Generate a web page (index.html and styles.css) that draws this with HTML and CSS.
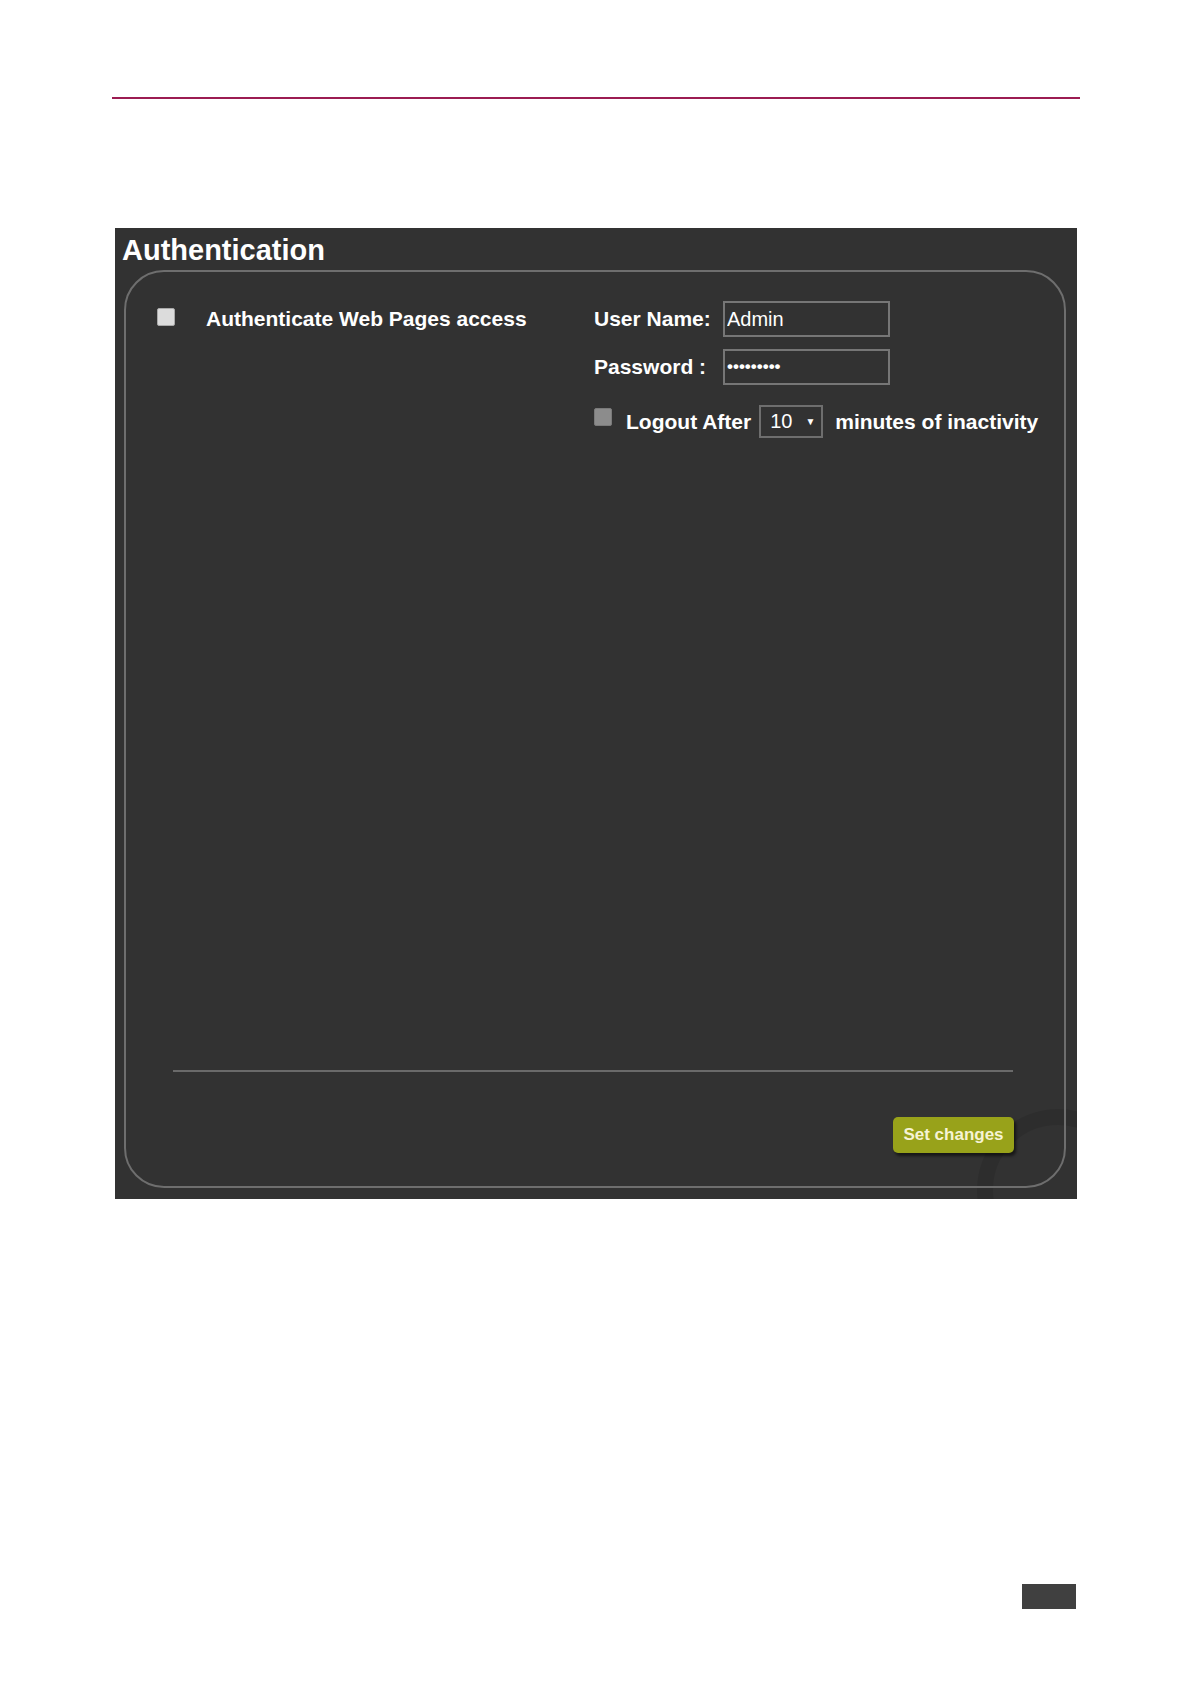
FILE: index.html
```html
<!DOCTYPE html>
<html lang="en">
<head>
    <meta charset="UTF-8">
    <title>Authentication</title>
    <link rel="stylesheet" href="styles.css">
</head>
<body>
    <div class="page">
        <div class="top-rule"></div>

        <div class="panel">
            <h1 class="panel-title">Authentication</h1>
            <div class="ring"></div>
            <div class="box">
                <div class="settings">
                    <div class="col-left">
                        <label class="check-row">
                            <input type="checkbox" class="check">
                            <span>Authenticate Web Pages access</span>
                        </label>
                    </div>
                    <div class="col-right">
                        <div class="field">
                            <span class="field-label">User Name:</span>
                            <input type="text" class="text-input" value="Admin">
                        </div>
                        <div class="field">
                            <span class="field-label">Password :</span>
                            <input type="password" class="text-input" value="123456789">
                        </div>
                        <div class="logout-row">
                            <input type="checkbox" class="check check-dim">
                            <span class="logout-label">Logout After</span>
                            <div class="select">
                                <span>10</span>
                                <span class="caret">&#9660;</span>
                            </div>
                            <span>minutes of inactivity</span>
                        </div>
                    </div>
                </div>

                <div class="divider"></div>
                <div class="actions">
                    <button class="set-btn">Set changes</button>
                </div>
            </div>
        </div>

        <div class="page-tab"></div>
    </div>
</body>
</html>
```

FILE: styles.css
```css
body {
    margin: 0;
    background: #ffffff;
    font-family: 'Liberation Sans', Arial, sans-serif;
}

.page {
    width: 1191px;
    padding-top: 97px;
}

.top-rule {
    margin-left: 112px;
    width: 968px;
    height: 2px;
    background: #9c1c52;
}

.panel {
    position: relative;
    overflow: hidden;
    margin: 129px 0 0 115px;
    width: 962px;
    height: 971px;
    background: #323232;
    color: #ffffff;
}

.panel-title {
    margin: 0;
    padding: 5px 0 0 7px;
    font-size: 29px;
    line-height: 34px;
    font-weight: bold;
}

/* faint logo ring in the corner */
.ring {
    position: absolute;
    right: -62px;
    bottom: -72px;
    width: 130px;
    height: 130px;
    border: 16px solid rgba(0, 0, 0, 0.09);
    border-radius: 50%;
}

.box {
    position: relative;
    display: flex;
    flex-direction: column;
    box-sizing: border-box;
    margin: 3px 0 0 9px;
    width: 942px;
    height: 918px;
    padding: 29px 0 0 31px;
    border: 2px solid #6e6e6e;
    border-radius: 40px;
}

.settings {
    display: flex;
    font-size: 21px;
    font-weight: bold;
}

.col-left {
    width: 437px;
}

.check-row {
    display: flex;
    align-items: center;
    gap: 31px;
    height: 36px;
}

.check {
    appearance: none;
    -webkit-appearance: none;
    margin: 0 0 4px 0;
    width: 18px;
    height: 18px;
    border: 1px solid #a9a9a9;
    border-radius: 2px;
    background: #dcdcdc;
}

.check-dim {
    margin-bottom: 10px;
    border-color: #7a7a7a;
    background: #8c8c8c;
}

.col-right {
    display: flex;
    flex-direction: column;
    gap: 12px;
}

.field {
    display: flex;
    align-items: center;
}

.field-label {
    width: 129px;
}

.text-input {
    box-sizing: border-box;
    width: 167px;
    height: 36px;
    padding: 0 2px;
    border: 2px solid #767676;
    background: transparent;
    color: #ffffff;
    font-family: 'Liberation Sans', Arial, sans-serif;
    font-size: 20px;
}

.text-input[type="password"] {
    font-size: 17px;
    font-weight: bold;
}

.logout-row {
    display: flex;
    align-items: center;
    margin-top: 8px;
}

.logout-label {
    margin: 0 8px 0 14px;
}

.select {
    box-sizing: border-box;
    display: flex;
    align-items: center;
    gap: 13px;
    width: 64px;
    height: 33px;
    margin-right: 12px;
    padding-left: 9px;
    border: 2px solid #6e6e6e;
    font-size: 20px;
    font-weight: normal;
}

.caret {
    font-size: 10px;
}

.divider {
    margin: auto 51px 0 16px;
    height: 2px;
    background: #6a6a6a;
}

.actions {
    display: flex;
    justify-content: flex-end;
    margin: 45px 50px 33px 0;
}

.set-btn {
    width: 121px;
    height: 36px;
    border: none;
    border-radius: 5px;
    background: #98a21a;
    color: #f6f3d4;
    font-family: 'Liberation Sans', Arial, sans-serif;
    font-size: 17px;
    font-weight: bold;
    box-shadow: 2px 3px 3px rgba(0, 0, 0, 0.55);
    cursor: pointer;
}

.page-tab {
    margin: 385px 0 0 1022px;
    width: 54px;
    height: 25px;
    background: #404040;
}
```
